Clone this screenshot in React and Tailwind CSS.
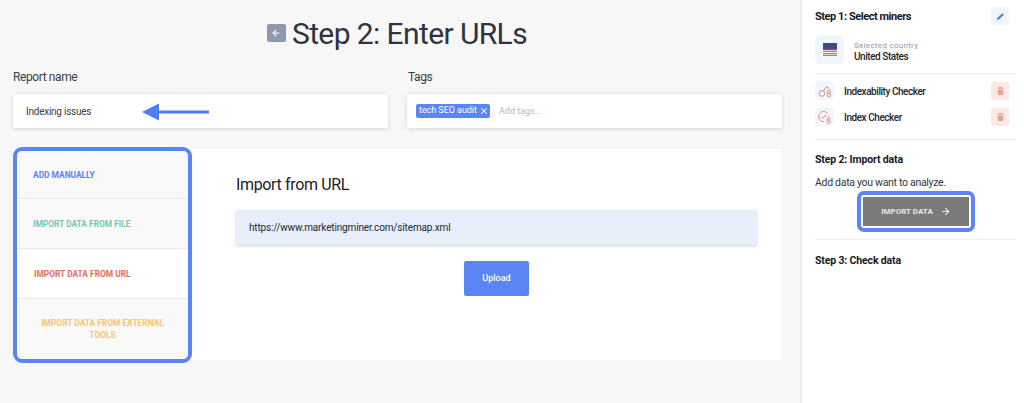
import { ArrowLeft, ArrowRight, X } from "lucide-react";

const font = { fontFamily: '"Roboto", "Liberation Sans", sans-serif' };

const tabs = [
  { text: "ADD MANUALLY", color: "text-[#5b84f5]", cls: "h-[48px] bg-[#f9f9f9] pl-[16px]" },
  { text: "IMPORT DATA FROM FILE", color: "text-[#74c7b5]", cls: "h-[50px] bg-[#f9f9f9] pl-[16px]" },
  { text: "IMPORT DATA FROM URL", color: "text-[#de6f5c]", cls: "h-[50px] bg-white pl-[17px]" },
  {
    text: "IMPORT DATA FROM EXTERNAL TOOLS",
    color: "text-[#fbc56d]",
    cls: "flex-1 bg-[#f9f9f9] justify-center text-center px-[18px]",
  },
];

const FlagIcon = () => (
  <svg width="14" height="13" viewBox="0 0 14 13">
    <rect width="14" height="13" fill="#f4f0f2" />
    <rect y="7.6" width="14" height="1.3" fill="#d8686f" />
    <rect y="10" width="14" height="1.2" fill="#d8686f" />
    <rect y="12" width="14" height="1" fill="#d8686f" />
    <rect width="14" height="6.8" fill="#3d4b80" />
  </svg>
);

const LinkMinerIcon = () => (
  <svg width="14" height="14" viewBox="0 0 14 14" fill="none" stroke="#e58b7c" strokeWidth="1">
    <circle cx="4" cy="9.5" r="2.8" />
    <path d="M5.5 7 L8 3.2 a2.2 2.2 0 0 1 3 2.4" />
    <circle cx="10.8" cy="8" r="1.5" />
    <circle cx="10.8" cy="11.2" r="1.7" />
  </svg>
);

const CheckMinerIcon = () => (
  <svg width="15" height="14" viewBox="0 0 15 14" fill="none" stroke="#e58b7c" strokeWidth="1">
    <path d="M10.5 3.5 A5 5 0 1 0 7 11.5" />
    <path d="M4 6.5 L6 8.5 L9.5 4.5" />
    <circle cx="11.5" cy="8.5" r="1.5" />
    <circle cx="11.5" cy="11.7" r="1.7" />
  </svg>
);

const TrashIcon = () => (
  <svg width="7" height="8" viewBox="0 0 7 8" fill="#e9a193">
    <path d="M2.4 0h2.2l.5.8H7v1H0v-1h1.9z" />
    <path d="M.6 2.6h5.8L6 8H1z" />
  </svg>
);

const PencilIcon = () => (
  <svg width="7" height="7" viewBox="0 0 7 7" fill="#4f7cf0">
    <path d="M0 7l.4-1.9L5 .5a.7.7 0 0 1 1 0l.5.5a.7.7 0 0 1 0 1L1.9 6.6z" />
  </svg>
);

const Miner = ({ icon, name }) => (
  <div className="flex items-center h-[19px]">
    <div className="w-[19px] h-[19px] rounded-[5px] bg-[#f1f6fe] flex items-center justify-center">{icon}</div>
    <span className="ml-[10px] pt-[1px] text-[10px] font-medium text-[#23262c] tracking-[-0.45px]">{name}</span>
    <div className="ml-auto w-[18px] h-[18px] rounded-[2px] bg-[#faeae6] flex items-center justify-center">
      <TrashIcon />
    </div>
  </div>
);

export default function App() {
  return (
    <div style={font} className="w-[1024px] h-[403px] flex overflow-hidden bg-[#f7f7f7]">
      <main className="w-[800px] shrink-0 pl-[13px] pr-[18px] flex flex-col">
        <div className="flex items-center justify-center h-[33px] mt-[17px] pr-[1px]">
          <div className="w-[19px] h-[18px] rounded-[2px] bg-[#8e99ab] flex items-center justify-center mr-[6px] -mt-[1px]">
            <ArrowLeft size={10} color="#f2f4f7" strokeWidth={3} />
          </div>
          <h1 className="text-[30px] leading-[33px] text-[#30333b] tracking-[-0.6px]">Step 2: Enter URLs</h1>
        </div>

        <div className="flex gap-[19px] mt-[19px]">
          <div className="w-[375px]">
            <label className="block text-[12px] leading-[16px] text-[#3a3d44] tracking-[-0.4px]">Report name</label>
            <div className="relative mt-[9px] h-[34px] bg-white rounded-[2px] shadow-[0_1px_4px_rgba(0,0,0,0.14)] flex items-center pl-[13px] text-[10px] text-[#3a3d44] tracking-[-0.25px]">
              Indexing issues
              <svg className="absolute left-[129px] top-[9px]" width="68" height="18" viewBox="0 0 68 18">
                <path d="M0 9 L17 0.5 V7.5 H67 V10.5 H17 V17.5 Z" fill="#4f7cf0" />
              </svg>
            </div>
          </div>
          <div className="w-[375px]">
            <label className="block text-[12px] leading-[16px] text-[#3a3d44] tracking-[-0.4px] pl-[1px]">Tags</label>
            <div className="mt-[9px] h-[34px] bg-white rounded-[2px] shadow-[0_1px_4px_rgba(0,0,0,0.14)] flex items-center pl-[9px]">
              <span className="h-[14px] w-[74px] pl-[3px] rounded-[2px] bg-[#5b84f5] text-white text-[9px] tracking-[-0.05px] flex items-center gap-[2px] whitespace-nowrap">
                tech SEO audit
                <X size={10} strokeWidth={2.5} />
              </span>
              <span className="ml-[9px] pt-[1px] text-[9px] text-[#b6b9bf]">Add tags...</span>
            </div>
          </div>
        </div>

        <div className="flex mt-[21px] h-[211px] w-[769px] bg-white rounded-[2px]">
          <div className="w-[179px] h-[216px] -mt-[2px] shrink-0 border-[4px] border-[#5b84f5] rounded-[9px] overflow-hidden flex flex-col">
            {tabs.map((tab, i) => (
              <div
                key={i}
                className={`flex items-center border-b last:border-b-0 border-[#e9e9ec] text-[8.4px] leading-[12px] font-bold ${tab.cls} ${tab.color}`}
              >
                {tab.text}
              </div>
            ))}
          </div>
          <div className="flex-1 pl-[44px] pr-[25px] pt-[26px]">
            <h2 className="text-[16px] leading-[20px] text-[#1f2126] tracking-[-0.35px]">Import from URL</h2>
            <div className="mt-[15px] h-[35px] rounded-[2px] bg-[#e8effb] shadow-[0_1px_3px_rgba(0,0,0,0.18)] flex items-center pl-[13px] text-[10px] text-[#23262c] tracking-[-0.15px]">
              https://www.marketingminer.com/sitemap.xml
            </div>
            <div className="flex justify-center mt-[16px]">
              <button className="w-[65px] h-[35px] rounded-[2px] bg-[#5b84f5] text-white text-[9px] font-medium">
                Upload
              </button>
            </div>
          </div>
        </div>
      </main>

      <div className="w-[2px] shrink-0 bg-[#ececec]" />

      <aside className="flex-1 bg-white pl-[13px] pr-[8px] flex flex-col text-[#17191d]">
        <div className="flex items-center justify-between pr-[7px] h-[18px] mt-[7px]">
          <h3 className="text-[11px] font-bold tracking-[-0.45px] pt-[2px]">Step 1: Select miners</h3>
          <div className="w-[18px] h-[18px] rounded-[2px] bg-[#f1f6fe] flex items-center justify-center">
            <PencilIcon />
          </div>
        </div>
        <div className="flex items-center mt-[10px]">
          <div className="w-[29px] h-[29px] rounded-[6px] bg-[#f1f6fe] flex items-center justify-center">
            <FlagIcon />
          </div>
          <div className="ml-[10px] pt-[2px]">
            <p className="text-[8px] leading-[11px] text-[#8e99ab] tracking-[0.3px]">Selected country</p>
            <p className="text-[10px] leading-[11px] font-medium text-[#23262c] tracking-[-0.45px]">United States</p>
          </div>
        </div>
        <div className="h-px bg-[#ededed] mt-[9px]" />
        <div className="flex flex-col gap-[7px] mt-[7px] pr-[7px]">
          <Miner icon={<LinkMinerIcon />} name="Indexability Checker" />
          <Miner icon={<CheckMinerIcon />} name="Index Checker" />
        </div>
        <div className="h-px bg-[#ededed] mt-[13px]" />
        <h3 className="text-[10.5px] leading-[13px] font-bold mt-[13px] tracking-[-0.15px]">Step 2: Import data</h3>
        <p className="text-[10.5px] leading-[13px] text-[#33363d] mt-[10px] tracking-[-0.3px]">
          Add data you want to analyze.
        </p>
        <div className="self-start ml-[42px] mt-[2px] w-[118px] h-[41px] border-[4px] border-[#5b84f5] rounded-[7px] p-[2px]">
          <div className="w-full h-full bg-[#7b7b7b] flex items-center justify-center gap-[7px] text-[#e6e6e6] text-[8px] font-bold">
            IMPORT DATA
            <ArrowRight size={11} strokeWidth={2.5} />
          </div>
        </div>
        <div className="h-px bg-[#ededed] mt-[7px]" />
        <h3 className="text-[10.5px] leading-[13px] font-bold mt-[14px] tracking-[-0.15px]">Step 3: Check data</h3>
      </aside>
    </div>
  );
}
